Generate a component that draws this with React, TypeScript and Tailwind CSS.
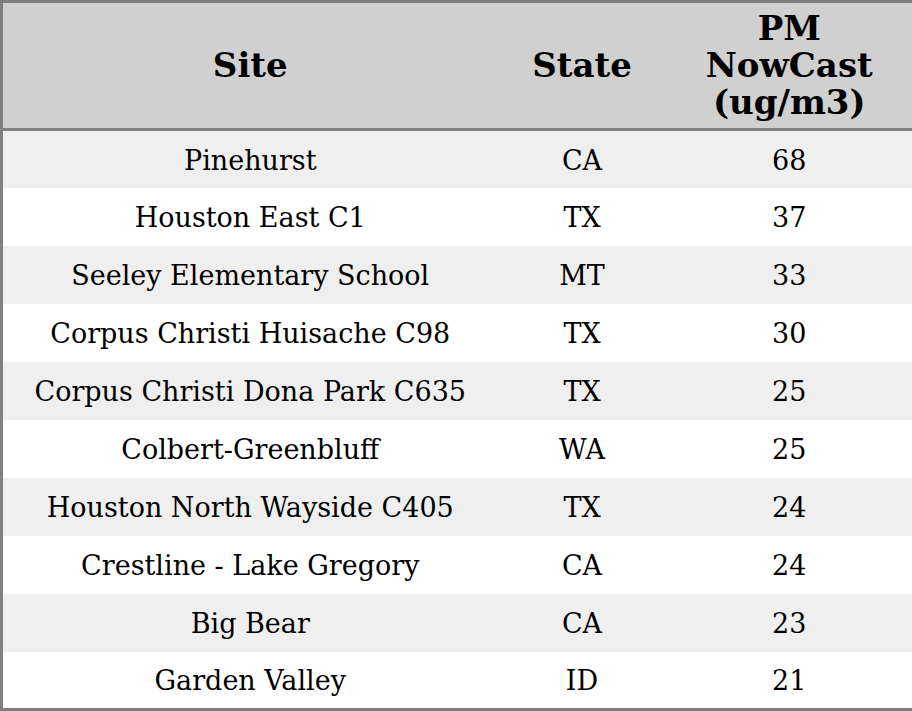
const ROWS: [string, string, number][] = [
  ["Pinehurst", "CA", 68],
  ["Houston East C1", "TX", 37],
  ["Seeley Elementary School", "MT", 33],
  ["Corpus Christi Huisache C98", "TX", 30],
  ["Corpus Christi Dona Park C635", "TX", 25],
  ["Colbert-Greenbluff", "WA", 25],
  ["Houston North Wayside C405", "TX", 24],
  ["Crestline - Lake Gregory", "CA", 24],
  ["Big Bear", "CA", 23],
  ["Garden Valley", "ID", 21],
];

export default function App() {
  return (
    <div className="w-[912px] h-[711px] bg-white font-['DejaVu_Serif',serif] text-black">
      <table className="w-[912px] border-collapse border-[3px] border-[#808080] table-fixed">
        <colgroup>
          <col className="w-[496px]" />
          <col className="w-[169px]" />
          <col className="w-[247px]" />
        </colgroup>
        <thead className="bg-[#d0d0d0]">
          <tr className="h-[128px] border-b-[3px] border-[#808080]">
            <th className="text-[34px] font-bold leading-[37px] text-center p-0">Site</th>
            <th className="text-[34px] font-bold leading-[37px] text-center p-0">State</th>
            <th className="text-[34px] font-bold leading-[37px] text-center p-0">
              PM
              <br />
              NowCast
              <br />
              (ug/m3)
            </th>
          </tr>
        </thead>
        <tbody>
          {ROWS.map(([site, state, pm], i) => (
            <tr
              key={site}
              className={`h-[58px] ${i % 2 === 0 ? "bg-[#efefef]" : "bg-white"}`}
            >
              <td className="text-[27px] leading-[32px] text-center p-0 pt-[3px]">{site}</td>
              <td className="text-[27px] leading-[32px] text-center p-0 pt-[3px]">{state}</td>
              <td className="text-[27px] leading-[32px] text-center p-0 pt-[3px]">{pm}</td>
            </tr>
          ))}
        </tbody>
      </table>
    </div>
  );
}
